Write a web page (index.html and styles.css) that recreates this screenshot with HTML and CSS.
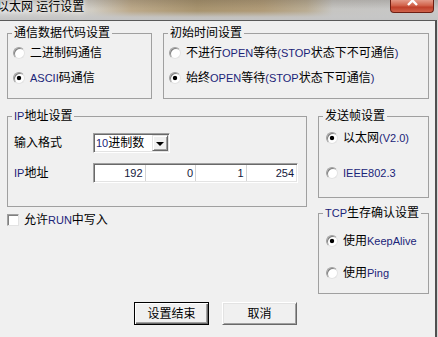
FILE: index.html
```html
<!DOCTYPE html>
<html lang="zh-CN">
<head>
    <meta charset="UTF-8">
    <meta name="viewport" content="width=device-width, initial-scale=1.0">
    <title>以太网 运行设置</title>
    <link rel="stylesheet" href="styles.css">
</head>
<body>
    <div class="titlebar">
        <span class="title">以太网 运行设置</span>
        <span class="close">
            <svg width="44" height="13" viewBox="0 0 44 13">
                <path d="M18 -4 L27 5 M27 -4 L18 5" stroke="#fff" stroke-width="2.4" fill="none"/>
            </svg>
        </span>
    </div>

    <div class="dialog">
        <div class="row top">
            <fieldset class="group code">
                <legend>通信数据代码设置</legend>
                <label class="opt"><input type="radio" name="code">二进制码通信</label>
                <label class="opt"><input type="radio" name="code" checked><span class="en">ASCII</span>码通信</label>
            </fieldset>
            <fieldset class="group open">
                <legend>初始时间设置</legend>
                <label class="opt"><input type="radio" name="open">不进行<span class="en">OPEN</span>等待<span class="en">(STOP</span>状态下不可通信<span class="en">)</span></label>
                <label class="opt"><input type="radio" name="open" checked>始终<span class="en">OPEN</span>等待<span class="en">(STOP</span>状态下可通信<span class="en">)</span></label>
            </fieldset>
        </div>

        <div class="row middle">
            <div class="left">
                <fieldset class="group ip">
                    <legend><span class="en">IP</span>地址设置</legend>
                    <div class="field first">
                        <span class="lbl">输入格式</span>
                        <div class="select">
                            <span class="val"><span class="en">10</span>进制数</span>
                            <span class="drop"><i></i></span>
                        </div>
                    </div>
                    <div class="field">
                        <span class="lbl"><span class="en">IP</span>地址</span>
                        <div class="ipbox">
                            <span class="cell">192</span>
                            <span class="cell">0</span>
                            <span class="cell">1</span>
                            <span class="cell">254</span>
                        </div>
                    </div>
                </fieldset>
                <label class="check"><input type="checkbox">允许<span class="en">RUN</span>中写入</label>
            </div>

            <div class="right">
                <fieldset class="group frame">
                    <legend>发送帧设置</legend>
                    <label class="opt"><input type="radio" name="frame" checked>以太网<span class="en">(V2.0)</span></label>
                    <label class="opt"><input type="radio" name="frame"><span class="en">IEEE802.3</span></label>
                </fieldset>
                <fieldset class="group tcp">
                    <legend><span class="en">TCP</span>生存确认设置</legend>
                    <label class="opt"><input type="radio" name="tcp" checked>使用<span class="en">KeepAlive</span></label>
                    <label class="opt"><input type="radio" name="tcp">使用<span class="en">Ping</span></label>
                </fieldset>
            </div>
        </div>

        <div class="buttons">
            <button class="btn default">设置结束</button>
            <button class="btn">取消</button>
        </div>
    </div>
</body>
</html>
```

FILE: styles.css
```css
* {
    box-sizing: border-box;
}
html, body {
    margin: 0;
}
body {
    width: 438px;
    height: 337px;
    overflow: hidden;
    background: #d6d6d6;
    font-family: "Liberation Sans", "Noto Sans CJK SC", sans-serif;
    font-size: 12px;
    line-height: 14px;
    color: #000;
}
.en {
    font-size: 11px;
    color: #1a2478;
}

/* title bar */
.titlebar {
    height: 20px;
    display: flex;
    justify-content: space-between;
    background:
        linear-gradient(to bottom, rgba(60, 50, 40, 0.18) 0%, rgba(60, 50, 40, 0) 45%, rgba(198, 198, 198, 0) 55%, rgba(198, 198, 198, 0.9) 85%, #c4c4c4 100%),
        linear-gradient(to right, #d4d4d4 0%, #d0ccc3 21%, #bca98a 30%, #a8946f 45%, #b09b78 60%, #b9ac93 70%, #c6c5c2 76%, #c8c8c8 100%);
}
.title {
    margin-left: -3px;
    text-shadow: 0 0 4px #fff, 0 0 8px #fff;
}
.close {
    width: 44px;
    height: 13px;
    margin-right: 4px;
    border: 1px solid #6e1e12;
    border-top: none;
    border-radius: 0 0 4px 4px;
    background: linear-gradient(to bottom, #e49a88 0%, #d2644c 45%, #c0402a 60%, #d0624a 100%);
    overflow: hidden;
}
.close svg {
    display: block;
    margin-left: -1px;
}

/* dialog */
.dialog {
    width: 437px;
    height: 317px;
    padding: 5px 0 0 7px;
    background: #f0f0f0;
    border-top: 1px solid #5a5a5a;
    border-right: 2px solid #505050;
}
.row {
    display: flex;
    gap: 11px;
}
.row.middle {
    margin-top: 10px;
}

.group {
    margin: 0;
    padding: 0;
    min-width: 0;
    border: 1px solid #a0a0a0;
}
.group legend {
    margin-left: 4px;
    padding: 0 2px;
    line-height: 14px;
}
.code {
    width: 145px;
    height: 73px;
}
.open {
    width: 266px;
    height: 73px;
}

.opt {
    display: flex;
    align-items: center;
    height: 25px;
    padding-left: 5px;
    white-space: nowrap;
}
input[type=radio],
input[type=checkbox] {
    appearance: none;
    -webkit-appearance: none;
    width: 12px;
    height: 12px;
    margin: 0 5px 0 0;
    flex: none;
    background: #fff;
    border: 1px solid;
    border-color: #a0a0a0 #e3e3e3 #e3e3e3 #a0a0a0;
    box-shadow: inset 1px 1px 0 #808080;
}
input[type=radio] {
    border-radius: 50%;
}
input[type=radio]:checked {
    background: radial-gradient(circle, #000 0, #000 1.8px, #fff 2.6px);
}

/* left column */
.left {
    width: 300px;
}
.ip {
    width: 300px;
    height: 98px;
}
.field {
    display: flex;
    align-items: center;
    padding-left: 6px;
    margin-top: 10px;
}
.field .lbl {
    width: 79px;
}
.select,
.ipbox {
    height: 20px;
    background: #fff;
    border: 1px solid;
    border-color: #a0a0a0 #fff #fff #a0a0a0;
    box-shadow: inset 1px 1px 0 #696969, inset -1px -1px 0 #e3e3e3;
}
.select {
    width: 77px;
    display: flex;
    align-items: center;
    justify-content: space-between;
    padding: 1px 1px 1px 2px;
}
.drop {
    width: 16px;
    height: 16px;
    display: flex;
    align-items: center;
    justify-content: center;
    background: #f0f0f0;
    border: 1px solid;
    border-color: #e3e3e3 #696969 #696969 #e3e3e3;
    box-shadow: inset 1px 1px 0 #fff, inset -1px -1px 0 #a0a0a0;
}
.drop i {
    width: 0;
    height: 0;
    border-left: 4px solid transparent;
    border-right: 4px solid transparent;
    border-top: 4px solid #000;
    margin-top: 1px;
}
.ipbox {
    width: 205px;
    display: flex;
    padding: 1px;
}
.cell {
    flex: 1;
    text-align: right;
    padding-right: 2px;
    line-height: 16px;
    font-size: 11px;
    color: #14183c;
    border-right: 1px solid #d4d4d4;
}
.cell:last-child {
    border-right: none;
}
.check {
    display: flex;
    align-items: center;
    margin-top: 6px;
}

/* right column */
.right {
    width: 111px;
    display: flex;
    flex-direction: column;
    gap: 8px;
}
.frame {
    width: 111px;
    height: 89px;
}
.tcp {
    width: 111px;
    height: 88px;
}
.right .opt {
    height: 24px;
    padding-left: 7px;
}
.frame .opt:first-of-type {
    margin-top: 3px;
}
.frame .opt:last-of-type {
    margin-top: 11px;
}
.tcp .opt:first-of-type {
    margin-top: 9px;
}
.tcp .opt:last-of-type {
    margin-top: 8px;
}

/* buttons */
.buttons {
    display: flex;
    gap: 13px;
    margin-top: 8px;
    padding-left: 127px;
}
.btn {
    width: 75px;
    height: 23px;
    padding: 0;
    font: inherit;
    color: #000;
    background: #f0f0f0;
    border: 1px solid;
    border-color: #fff #696969 #696969 #fff;
    box-shadow: inset 1px 1px 0 #e3e3e3, inset -1px -1px 0 #a0a0a0;
}
.btn.default {
    border: 1px solid #000;
    box-shadow: inset 1px 1px 0 #fff, inset -1px -1px 0 #696969, inset -2px -2px 0 #a0a0a0;
}
```
